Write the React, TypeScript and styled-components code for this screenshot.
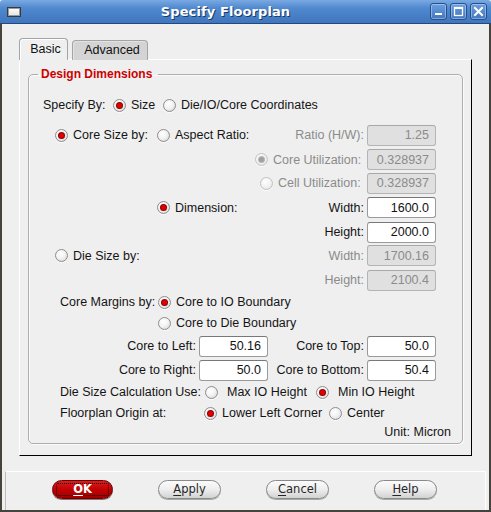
import React from "react";
import styled, { createGlobalStyle } from "styled-components";

const Global = createGlobalStyle`
  html, body { margin: 0; padding: 0; background: #efefef; }
  body { width: 491px; height: 512px; overflow: hidden; font-family: "Liberation Sans", Arial, sans-serif; }
  * { box-sizing: border-box; }
`;

const Window = styled.div`
  width: 491px;
  height: 512px;
  display: flex;
  flex-direction: column;
  background: #efefef;
`;

const TitleBar = styled.div`
  height: 24px;
  flex: none;
  display: flex;
  align-items: center;
  padding: 0 4px 0 7px;
  background: linear-gradient(#7aa9e2 0%, #5089cf 35%, #3f76bd 100%);
  border-bottom: 1px solid #27477a;
  border-radius: 3px 3px 0 0;
`;

const WinIcon = styled.div`
  width: 14px;
  height: 10px;
  background: linear-gradient(#ffffff, #e4e4e4);
  border: 1px solid #3a3a3a;
  box-shadow: inset 0 0 0 1px #9a9a9a;
  margin-top: 1px;
`;

const Title = styled.div`
  flex: 1;
  text-align: center;
  font-family: "DejaVu Sans", Verdana, sans-serif;
  font-weight: bold;
  font-size: 13px;
  color: #ffffff;
  text-shadow: 1px 1px 0 #1c3a66;
  letter-spacing: 0.1px;
`;

const WinButtons = styled.div`
  display: flex;
  gap: 3px;
`;

const WinButton = styled.div`
  width: 17px;
  height: 17px;
  border-radius: 3px;
  border: 1px solid #24508a;
  background: linear-gradient(#6c9ee0, #4177c0);
  box-shadow: inset 0 0 0 1px rgba(255, 255, 255, 0.35);
  display: flex;
  align-items: center;
  justify-content: center;
`;

const Frame = styled.div`
  flex: 1;
  display: flex;
  flex-direction: column;
  border-left: 2px solid #46433f;
  border-right: 2px solid #46433f;
  border-bottom: 2px solid #46433f;
  padding-top: 14px;
`;

const TabBar = styled.div`
  display: flex;
  align-items: flex-end;
  gap: 4px;
  height: 22px;
  margin-left: 17px;
  position: relative;
  z-index: 1;
`;

const Tab = styled.div<{ $active?: boolean; $w: number }>`
  width: ${(p) => p.$w}px;
  height: ${(p) => (p.$active ? 22 : 20)}px;
  padding: 0 0 ${(p) => (p.$active ? 2 : 1)}px 4px;
  display: flex;
  align-items: center;
  justify-content: center;
  border: 1px solid #a4a4a4;
  border-bottom: none;
  border-radius: 4px 4px 0 0;
  background: ${(p) => (p.$active ? "#efefef" : "#d4d4d4")};
  box-shadow: ${(p) => (p.$active ? "inset 1px 1px 0 #ffffff" : "inset 1px 1px 0 #e2e2e2")};
  font-size: 12.5px;
  color: #111;
`;

const Pane = styled.div`
  width: 453px;
  height: 397px;
  margin: -1px 0 0 17px;
  border-top: 1px solid #ffffff;
  border-left: 1px solid #ffffff;
  border-right: 1px solid #000000;
  border-bottom: 1px solid #000000;
  padding: 7px 8px 0 8px;
`;

const Group = styled.fieldset`
  margin: 0;
  width: 435px;
  padding: 6px 0 3px 0;
  border: 1px solid #aeaeae;
  border-radius: 5px;
  box-shadow: 1px 1px 0 #fafafa, inset 1px 1px 0 #fafafa;
`;

const Legend = styled.legend`
  margin-left: 9px;
  padding: 0 6px 0 3px;
  font-size: 12px;
  line-height: 14px;
  font-weight: bold;
  color: #cc0000;
`;

const Row = styled.div<{ $h: number; $pl?: number; $end?: boolean; $pr?: number }>`
  display: flex;
  align-items: center;
  justify-content: ${(p) => (p.$end ? "flex-end" : "flex-start")};
  height: ${(p) => p.$h}px;
  padding-left: ${(p) => p.$pl ?? 0}px;
  padding-right: ${(p) => p.$pr ?? 26}px;
  font-size: 12.5px;
`;

const Slot = styled.div<{ $w: number }>`
  width: ${(p) => p.$w}px;
  flex: none;
  display: flex;
  align-items: center;
`;

const Text = styled.span<{ $off?: boolean }>`
  white-space: nowrap;
  color: ${(p) => (p.$off ? "#8b8b8b" : "#141414")};
`;

const Option = styled.label<{ $gap?: number }>`
  display: flex;
  align-items: center;
  gap: ${(p) => p.$gap ?? 5}px;
  white-space: nowrap;
`;

const Radio = styled.span<{ $on?: boolean; $off?: boolean }>`
  position: relative;
  flex: none;
  width: 13px;
  height: 13px;
  border-radius: 50%;
  border: 1px solid ${(p) => (p.$off ? "#c2c2c2" : "#8d8d8d")};
  background: ${(p) =>
    p.$off
      ? "radial-gradient(circle at 40% 35%, #ffffff 0%, #f2f2f2 50%, #dedede 100%)"
      : "radial-gradient(circle at 40% 35%, #ffffff 0%, #f3f3f3 45%, #cfcfcf 100%)"};
  box-shadow: 0 1px 0 rgba(255, 255, 255, 0.8);
  &::after {
    content: "";
    display: ${(p) => (p.$on ? "block" : "none")};
    position: absolute;
    left: 3px;
    top: 3px;
    width: 5px;
    height: 5px;
    border-radius: 50%;
    background: ${(p) => (p.$off ? "#a0a0a0" : "#e10000")};
    box-shadow: 0 0 0 1px ${(p) => (p.$off ? "#b8b8b8" : "#8a0000")};
  }
`;

const Field = styled.div<{ $right?: boolean }>`
  display: flex;
  align-items: center;
  gap: 3px;
  margin-left: ${(p) => (p.$right ? "auto" : "0")};
`;

const FieldLabel = styled.span<{ $w?: number; $off?: boolean }>`
  ${(p) => (p.$w ? `width: ${p.$w}px;` : "")}
  text-align: right;
  white-space: nowrap;
  color: ${(p) => (p.$off ? "#8b8b8b" : "#141414")};
`;

const Input = styled.input<{ $off?: boolean }>`
  width: 69px;
  height: 21px;
  border: 1px solid ${(p) => (p.$off ? "#b4b4b4" : "#9a9a9a")};
  border-top-color: ${(p) => (p.$off ? "#a8a8a8" : "#787878")};
  border-radius: 3px;
  background: ${(p) => (p.$off ? "#e0e0e0" : "#ffffff")};
  color: ${(p) => (p.$off ? "#8b8b8b" : "#111111")};
  -webkit-text-fill-color: ${(p) => (p.$off ? "#8b8b8b" : "#111111")};
  opacity: 1;
  font-family: "Liberation Sans", Arial, sans-serif;
  font-size: 12.5px;
  text-align: right;
  padding: 0 6px 0 2px;
  margin: 0;
  outline: none;
`;

const Panel = styled.div`
  height: 39px;
  margin: 15px 3px 0 3px;
  border-top: 1px solid #ffffff;
  border-right: 1px solid #ffffff;
  border-left: 1px solid #bdbdbd;
  display: flex;
  align-items: flex-start;
  gap: 45px;
  padding: 8px 0 0 46px;
`;

const Button = styled.button<{ $primary?: boolean }>`
  position: relative;
  width: ${(p) => (p.$primary ? 61 : 63)}px;
  height: 19px;
  border-radius: 10px;
  border: 1px solid ${(p) => (p.$primary ? "#6e0000" : "#8a8a8a")};
  background: ${(p) =>
    p.$primary
      ? "linear-gradient(#d81c1c, #c00000 55%, #a30000)"
      : "linear-gradient(#fbfbfb, #eeeeee 50%, #d2d2d2)"};
  box-shadow: 0 1px 0 ${(p) => (p.$primary ? "#7a7a7a" : "#a8a8a8")};
  font-family: "DejaVu Sans", Verdana, sans-serif;
  font-size: 11.5px;
  font-weight: ${(p) => (p.$primary ? "bold" : "normal")};
  color: ${(p) => (p.$primary ? "#ffffff" : "#262626")};
  padding: 0;
  display: flex;
  align-items: center;
  justify-content: center;
  line-height: 1;
  u { text-decoration-thickness: 1px; text-underline-offset: 2px; }
`;

const Focus = styled.span`
  position: absolute;
  inset: 2px 3px;
  border: 1px dotted #1a0000;
  border-radius: 2px;
`;

const BtnText = styled.span`
  position: relative;
`;

function MinIcon() {
  return (
    <svg width="11" height="11" viewBox="0 0 11 11">
      <rect x="2" y="7" width="7" height="2" fill="#fff" />
    </svg>
  );
}
function MaxIcon() {
  return (
    <svg width="11" height="11" viewBox="0 0 11 11">
      <rect x="1.5" y="1.5" width="8" height="8" fill="none" stroke="#fff" strokeWidth="1.3" />
      <rect x="1.5" y="1.5" width="8" height="1.5" fill="#fff" />
    </svg>
  );
}
function CloseIcon() {
  return (
    <svg width="11" height="11" viewBox="0 0 11 11">
      <path d="M2 2 L9 9 M9 2 L2 9" stroke="#fff" strokeWidth="2" strokeLinecap="square" />
    </svg>
  );
}

export default function App() {
  return (
    <>
      <Global />
      <Window>
        <TitleBar>
          <WinIcon />
          <Title>Specify Floorplan</Title>
          <WinButtons>
            <WinButton><MinIcon /></WinButton>
            <WinButton><MaxIcon /></WinButton>
            <WinButton><CloseIcon /></WinButton>
          </WinButtons>
        </TitleBar>
        <Frame>
          <TabBar>
            <Tab $active $w={49}>Basic</Tab>
            <Tab $w={76}>Advanced</Tab>
          </TabBar>
          <Pane>
            <Group>
              <Legend>Design Dimensions</Legend>

              <Row $h={36} $pl={14}>
                <Slot $w={70}><Text>Specify By:</Text></Slot>
                <Slot $w={50}><Option><Radio $on /><Text>Size</Text></Option></Slot>
                <Option><Radio /><Text>Die/IO/Core Coordinates</Text></Option>
              </Row>

              <Row $h={24} $pl={26}>
                <Slot $w={102}><Option><Radio $on /><Text>Core Size by:</Text></Option></Slot>
                <Option><Radio /><Text>Aspect Ratio:</Text></Option>
                <Field $right>
                  <FieldLabel $off>Ratio (H/W):</FieldLabel>
                  <Input $off disabled value="1.25" readOnly />
                </Field>
              </Row>

              <Row $h={25} $pl={226}>
                <Option $gap={5}><Radio $on $off /><Text $off>Core Utilization:</Text></Option>
                <Field $right><Input $off disabled value="0.328937" readOnly /></Field>
              </Row>

              <Row $h={22} $pl={231}>
                <Option><Radio $off /><Text $off>Cell Utilization:</Text></Option>
                <Field $right><Input $off disabled value="0.328937" readOnly /></Field>
              </Row>

              <Row $h={27} $pl={128}>
                <Option><Radio $on /><Text>Dimension:</Text></Option>
                <Field $right>
                  <FieldLabel>Width:</FieldLabel>
                  <Input value="1600.0" readOnly />
                </Field>
              </Row>

              <Row $h={22}>
                <Field $right>
                  <FieldLabel>Height:</FieldLabel>
                  <Input value="2000.0" readOnly />
                </Field>
              </Row>

              <Row $h={25} $pl={26}>
                <Option><Radio /><Text>Die Size by:</Text></Option>
                <Field $right>
                  <FieldLabel $off>Width:</FieldLabel>
                  <Input $off disabled value="1700.16" readOnly />
                </Field>
              </Row>

              <Row $h={24}>
                <Field $right>
                  <FieldLabel $off>Height:</FieldLabel>
                  <Input $off disabled value="2100.4" readOnly />
                </Field>
              </Row>

              <Row $h={20} $pl={31}>
                <Slot $w={98}><Text>Core Margins by:</Text></Slot>
                <Option><Radio $on /><Text>Core to IO Boundary</Text></Option>
              </Row>

              <Row $h={22} $pl={129}>
                <Option><Radio /><Text>Core to Die Boundary</Text></Option>
              </Row>

              <Row $h={24} $pl={31}>
                <Field>
                  <FieldLabel $w={136}>Core to Left:</FieldLabel>
                  <Input value="50.16" readOnly />
                </Field>
                <Field $right>
                  <FieldLabel>Core to Top:</FieldLabel>
                  <Input value="50.0" readOnly />
                </Field>
              </Row>

              <Row $h={24} $pl={31}>
                <Field>
                  <FieldLabel $w={136}>Core to Right:</FieldLabel>
                  <Input value="50.0" readOnly />
                </Field>
                <Field $right>
                  <FieldLabel>Core to Bottom:</FieldLabel>
                  <Input value="50.4" readOnly />
                </Field>
              </Row>

              <Row $h={20} $pl={31}>
                <Slot $w={145}><Text>Die Size Calculation Use:</Text></Slot>
                <Slot $w={111}><Option $gap={9}><Radio /><Text>Max IO Height</Text></Option></Slot>
                <Option $gap={9}><Radio $on /><Text>Min IO Height</Text></Option>
              </Row>

              <Row $h={22} $pl={31}>
                <Slot $w={144}><Text>Floorplan Origin at:</Text></Slot>
                <Slot $w={125}><Option><Radio $on /><Text>Lower Left Corner</Text></Option></Slot>
                <Option><Radio /><Text>Center</Text></Option>
              </Row>

              <Row $h={16} $end $pr={11}>
                <Text>Unit: Micron</Text>
              </Row>
            </Group>
          </Pane>
          <Panel>
            <Button $primary>
              <Focus />
              <BtnText><u>O</u>K</BtnText>
            </Button>
            <Button><BtnText><u>A</u>pply</BtnText></Button>
            <Button><BtnText><u>C</u>ancel</BtnText></Button>
            <Button><BtnText><u>H</u>elp</BtnText></Button>
          </Panel>
        </Frame>
      </Window>
    </>
  );
}
